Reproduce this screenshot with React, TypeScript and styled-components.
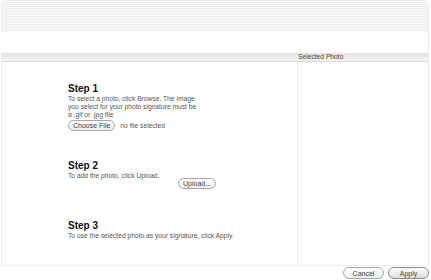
import React from "react";
import styled, { createGlobalStyle } from "styled-components";

const Global = createGlobalStyle`
  body {
    margin: 0;
    background: #fff;
    font-family: "Liberation Sans", Arial, sans-serif;
    color: #333;
  }
`;

const Page = styled.div`
  width: 431px;
  height: 280px;
  display: flex;
  flex-direction: column;
`;

const Frame = styled.div`
  margin: 0 2px 0 1px;
  display: flex;
  flex-direction: column;
`;

const Stripes = styled.div`
  height: 31px;
  border: 1px solid #ececec;
  border-bottom: none;
  border-radius: 6px 6px 0 0;
  background: repeating-linear-gradient(
    to bottom,
    #f8f8f8 0px,
    #f8f8f8 1px,
    #eeeeee 1px,
    #eeeeee 2px
  );
`;

const Blank = styled.div`
  height: 21px;
  border-right: 1px solid #ececec;
`;

const ColumnBar = styled.div`
  display: flex;
  height: 8px;
  background: linear-gradient(to bottom, #e2e2e2 0%, #ebebeb 50%, #f3f3f3 100%);
  border-bottom: 1px solid #dcdcdc;
`;

const BarCell = styled.div<{ $w?: number }>`
  ${(p) => (p.$w ? `width: ${p.$w}px;` : "flex: 1;")}
  font-size: 6.7px;
  line-height: 8px;
  color: #444;
  padding-left: 1px;
`;

const Body = styled.div`
  display: flex;
  height: 203px;
  border: 1px solid #ececec;
  border-top: none;
  border-radius: 0 0 0 4px;
`;

const Left = styled.div`
  width: 229px;
  padding: 21px 0 0 66px;
  border-right: 1px solid #ececec;
  display: flex;
  flex-direction: column;
`;

const Right = styled.div`
  flex: 1;
`;

const Step = styled.div<{ $h: number }>`
  height: ${(p) => p.$h}px;
`;

const Heading = styled.div`
  font-size: 10px;
  font-weight: bold;
  color: #111;
  line-height: 12px;
`;

const Text = styled.div`
  font-size: 6.7px;
  line-height: 8px;
  color: #555;
  width: 130px;
`;

const WideText = styled(Text)`
  width: auto;
`;

const FileRow = styled.div`
  display: flex;
  align-items: center;
  gap: 5px;
  margin-top: 1px;
`;

const Pill = styled.button<{ $dark?: boolean }>`
  font-family: "Liberation Sans", Arial, sans-serif;
  font-size: 7px;
  color: #444;
  height: 11px;
  padding: 0 4px;
  border-radius: 6px;
  border: 1px solid ${(p) => (p.$dark ? "#8a8a8a" : "#a8a8a8")};
  background: ${(p) =>
    p.$dark
      ? "linear-gradient(to bottom, #fdfdfd, #dcdcdc)"
      : "linear-gradient(to bottom, #ffffff, #ececec)"};
  line-height: 9px;
  cursor: default;
`;

const UploadRow = styled.div`
  display: flex;
  padding-left: 110px;
  margin-top: -2px;
`;

const Footer = styled.div`
  display: flex;
  justify-content: flex-end;
  gap: 4px;
  padding: 1px 2px 0 0;
`;

const FooterButton = styled(Pill)`
  width: 41px;
  height: 12px;
  font-size: 7px;
`;

export default function App() {
  return (
    <Page>
      <Global />
      <Frame>
        <Stripes />
        <Blank />
        <ColumnBar>
          <BarCell $w={295} />
          <BarCell>Selected Photo</BarCell>
        </ColumnBar>
        <Body>
          <Left>
            <Step $h={77}>
              <Heading>Step 1</Heading>
              <Text>
                To select a photo, click Browse. The image you select for your
                photo signature must be a .gif or .jpg file
              </Text>
              <FileRow>
                <Pill>Choose File</Pill>
                <Text>no file selected</Text>
              </FileRow>
            </Step>
            <Step $h={60}>
              <Heading>Step 2</Heading>
              <Text>To add the photo, click Upload.</Text>
              <UploadRow>
                <Pill>Upload...</Pill>
              </UploadRow>
            </Step>
            <Step $h={40}>
              <Heading>Step 3</Heading>
              <WideText>
                To use the selected photo as your signature, click Apply.
              </WideText>
            </Step>
          </Left>
          <Right />
        </Body>
      </Frame>
      <Footer>
        <FooterButton>Cancel</FooterButton>
        <FooterButton $dark>Apply</FooterButton>
      </Footer>
    </Page>
  );
}
